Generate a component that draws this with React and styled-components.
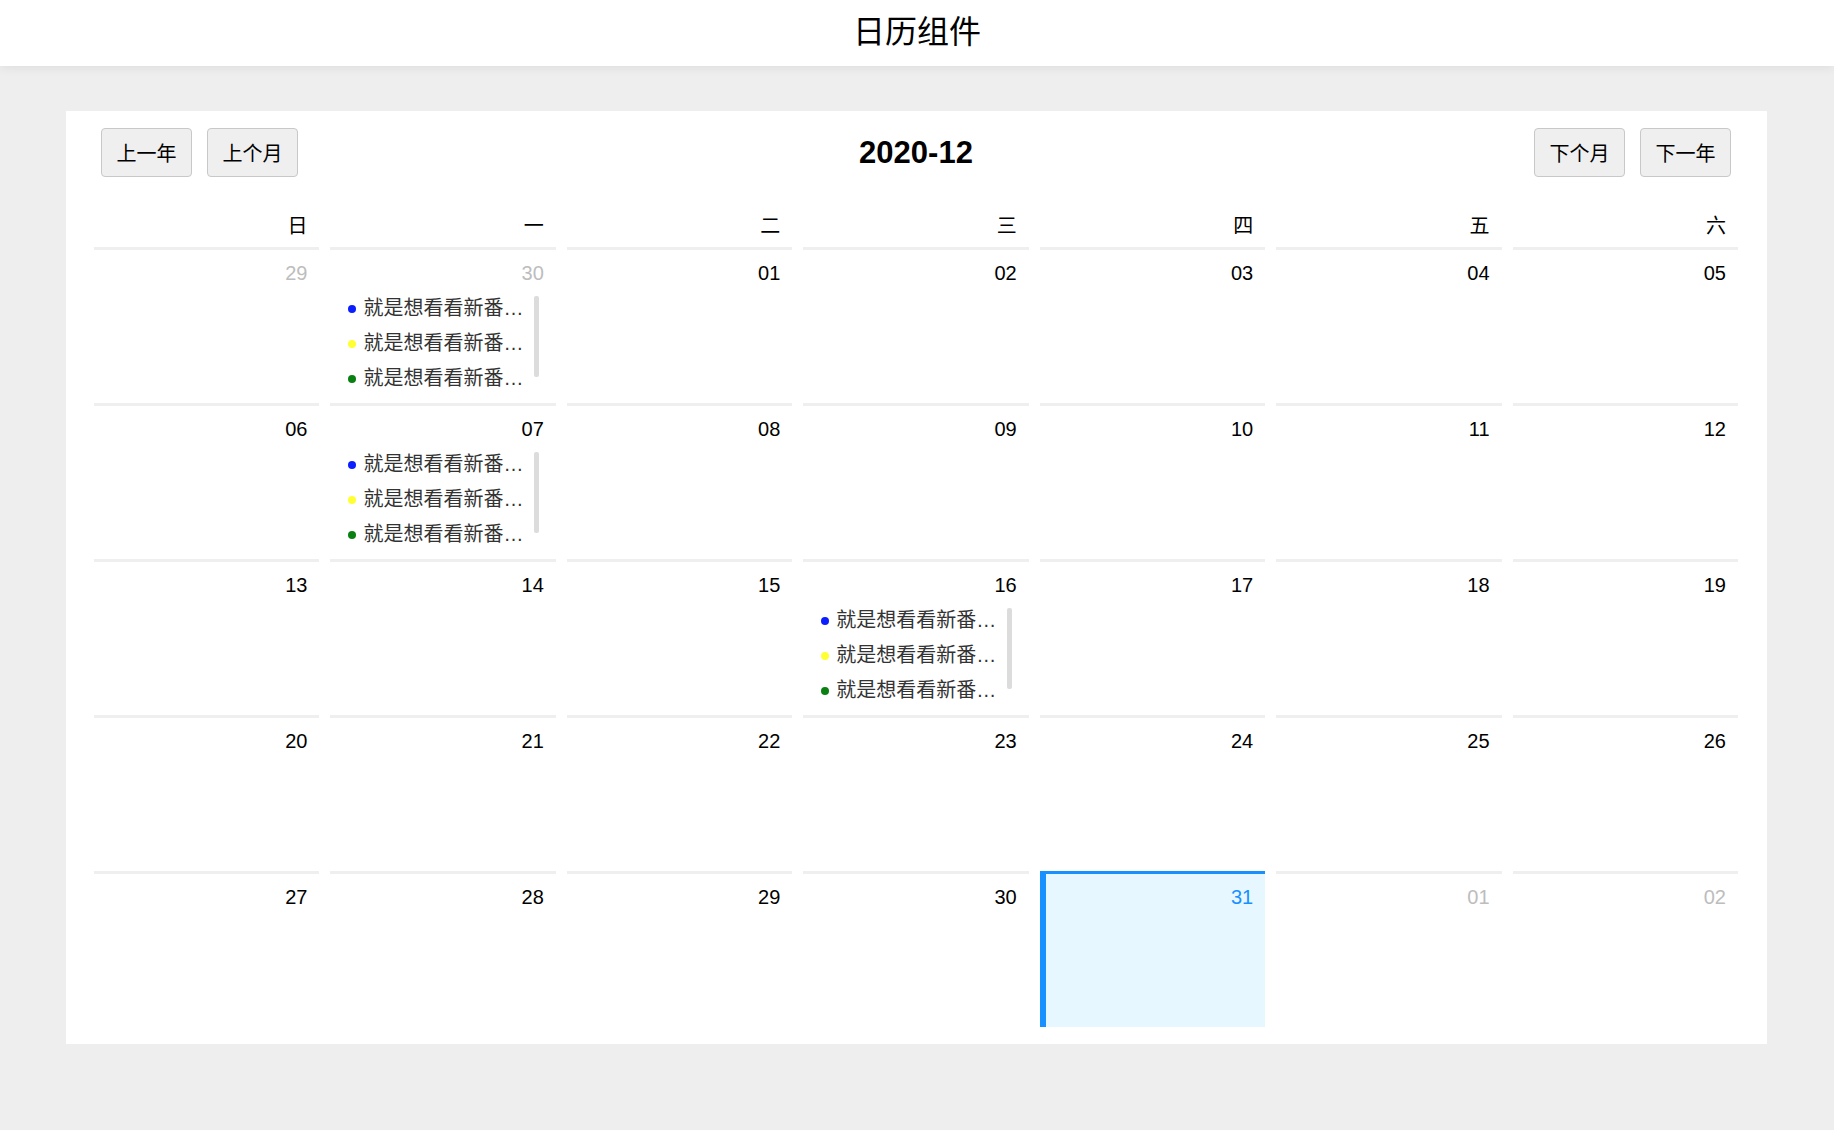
import React from 'react';
import styled, { createGlobalStyle } from 'styled-components';

const GlobalStyle = createGlobalStyle`
  html, body {
    margin: 0;
    padding: 0;
    background: #eeeeee;
  }
  body {
    font-family: "Liberation Sans", "Noto Sans CJK SC", sans-serif;
    color: #000;
  }
  * { box-sizing: border-box; }
`;

const Page = styled.div`
  min-height: 100vh;
  display: flex;
  flex-direction: column;
`;

const TopBar = styled.header`
  height: 66px;
  background: #fff;
  box-shadow: 0 2px 10px rgba(0, 0, 0, 0.07);
  text-align: center;
  font-size: 32px;
  line-height: 64px;
  color: #000;
  position: relative;
  z-index: 1;
`;

const Card = styled.section`
  margin: 45px 67px 0 66px;
  background: #fff;
  padding: 17px 29px 17px 28px;
`;

const Toolbar = styled.div`
  margin: 0 7px;
  height: 49px;
  display: grid;
  grid-template-columns: 1fr auto 1fr;
  align-items: center;
`;

const ButtonGroup = styled.div`
  display: flex;
  gap: 15px;
  justify-self: ${(p) => (p.$end ? 'end' : 'start')};
`;

const NavButton = styled.button`
  height: 49px;
  padding: 0 14.5px;
  font-family: inherit;
  font-size: 20px;
  color: #000;
  background: #efefef;
  border: 1px solid #c8c8c8;
  border-radius: 4px;
  cursor: pointer;
`;

const MonthTitle = styled.h2`
  margin: 0;
  font-size: 31px;
  font-weight: bold;
  color: #000;
`;

const Grid = styled.div`
  margin-top: 34px;
  display: grid;
  grid-template-columns: repeat(7, minmax(0, 1fr));
  column-gap: 11px;
`;

const WeekdayCell = styled.div`
  text-align: right;
  padding: 0 12px 6px;
  font-size: 20px;
  line-height: 30px;
  color: #000;
`;

const DayCell = styled.div`
  height: 156px;
  border-top: 3px solid ${(p) => (p.$today ? '#1890ff' : '#efefef')};
  border-left: ${(p) => (p.$today ? '6px solid #1890ff' : '0 none')};
  background: ${(p) => (p.$today ? '#e6f7ff' : '#fff')};
  padding: 8px 12px 0;
  display: flex;
  flex-direction: column;
`;

const DayNumber = styled.div`
  text-align: right;
  font-size: 20px;
  line-height: 30px;
  color: ${(p) => (p.$today ? '#1890ff' : p.$muted ? '#bdbdbd' : '#000')};
`;

const EventArea = styled.div`
  margin-top: 3px;
  height: 105px;
  display: flex;
`;

const EventList = styled.ul`
  flex: 1;
  min-width: 0;
  margin: 0;
  padding: 0 0 0 6px;
  list-style: none;
  overflow: hidden;
`;

const EventItem = styled.li`
  height: 35px;
  display: flex;
  align-items: center;
  font-size: 20px;
  line-height: 35px;
  color: #333;
`;

const Dot = styled.span`
  flex: none;
  width: 8px;
  height: 8px;
  border-radius: 50%;
  margin-right: 7px;
  background: ${(p) => p.$color};
`;

const EventText = styled.span`
  flex: 1;
  min-width: 0;
  white-space: nowrap;
  overflow: hidden;
  text-overflow: ellipsis;
`;

const ScrollThumb = styled.div`
  flex: none;
  width: 5px;
  height: 81px;
  margin: 5px 5px 0 6px;
  background: #dcdcdc;
  border-radius: 2px;
`;

const WEEKDAYS = ['日', '一', '二', '三', '四', '五', '六'];

const EVENTS = [
  { color: '#0a1eff', text: '就是想看看新番…' },
  { color: '#ffff33', text: '就是想看看新番…' },
  { color: '#0a7f12', text: '就是想看看新番…' },
];

const pad = (n) => String(n).padStart(2, '0');

function buildDays(year, month) {
  const first = new Date(year, month - 1, 1);
  const startOffset = first.getDay();
  const days = [];
  for (let i = 0; i < 35; i++) {
    const d = new Date(year, month - 1, 1 - startOffset + i);
    days.push({
      key: `${d.getFullYear()}-${d.getMonth() + 1}-${d.getDate()}`,
      label: pad(d.getDate()),
      muted: d.getMonth() !== month - 1,
    });
  }
  return days;
}

const EVENT_DAYS = new Set(['2020-11-30', '2020-12-7', '2020-12-16']);
const TODAY = '2020-12-31';

export default function App() {
  const days = buildDays(2020, 12);
  return (
    <Page>
      <GlobalStyle />
      <TopBar>日历组件</TopBar>
      <Card>
        <Toolbar>
          <ButtonGroup>
            <NavButton>上一年</NavButton>
            <NavButton>上个月</NavButton>
          </ButtonGroup>
          <MonthTitle>2020-12</MonthTitle>
          <ButtonGroup $end>
            <NavButton>下个月</NavButton>
            <NavButton>下一年</NavButton>
          </ButtonGroup>
        </Toolbar>
        <Grid>
          {WEEKDAYS.map((w) => (
            <WeekdayCell key={w}>{w}</WeekdayCell>
          ))}
          {days.map((d) => {
            const today = d.key === TODAY;
            const hasEvents = EVENT_DAYS.has(d.key);
            return (
              <DayCell key={d.key} $today={today}>
                <DayNumber $muted={d.muted} $today={today}>
                  {d.label}
                </DayNumber>
                {hasEvents && (
                  <EventArea>
                    <EventList>
                      {EVENTS.map((e, i) => (
                        <EventItem key={i}>
                          <Dot $color={e.color} />
                          <EventText>{e.text}</EventText>
                        </EventItem>
                      ))}
                    </EventList>
                    <ScrollThumb />
                  </EventArea>
                )}
              </DayCell>
            );
          })}
        </Grid>
      </Card>
    </Page>
  );
}
